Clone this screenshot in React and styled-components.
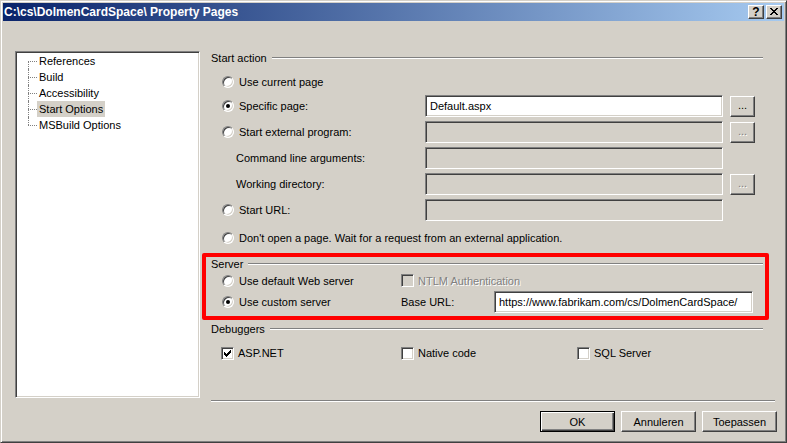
import React from 'react';
import styled, { createGlobalStyle } from 'styled-components';

const face = '#d4d0c8';

const GlobalStyle = createGlobalStyle`
    html, body {
        margin: 0;
        padding: 0;
        background: ${face};
    }
    body {
        font-family: "Liberation Sans", Arial, sans-serif;
        font-size: 11px;
        color: #000;
    }
    * { box-sizing: border-box; }
`

const Window = styled.div`
    width: 787px;
    height: 443px;
    display: flex;
    flex-direction: column;
    background: ${face};
    border: 1px solid;
    border-color: ${face} #404040 #404040 ${face};
    box-shadow: inset 1px 1px #fff, inset -1px -1px #808080;
    padding: 2px;
`

const TitleBar = styled.div`
    height: 18px;
    display: flex;
    align-items: center;
    padding: 0 2px 0 1px;
    background: linear-gradient(to right, #0a246a, #a6caf0);
`

const Title = styled.div`
    flex: 1;
    color: #fff;
    font-weight: bold;
    font-size: 12px;
    white-space: nowrap;
`

const CaptionButtons = styled.div`
    display: flex;
    gap: 2px;
`

const CaptionButton = styled.div`
    width: 16px;
    height: 14px;
    display: flex;
    align-items: center;
    justify-content: center;
    background: ${face};
    border: 1px solid;
    border-color: #fff #404040 #404040 #fff;
    box-shadow: inset -1px -1px #808080;
    font-weight: bold;
    font-size: 12px;
    line-height: 1;
    padding-bottom: 1px;
`

const Body = styled.div`
    flex: 1;
    display: flex;
    flex-direction: column;
    padding: 30px 7px 0 12px;
`

const Main = styled.div`
    display: flex;
    gap: 11px;
    height: 351px;
`

const Tree = styled.ul`
    list-style: none;
    margin: 0;
    width: 185px;
    height: 347px;
    padding: 0;
    background: #fff;
    border: 1px solid;
    border-color: #808080 #fff #fff #808080;
    box-shadow: inset 1px 1px #404040, inset -1px -1px ${face};
    padding-top: 1px;
`

const TreeItem = styled.li`
    position: relative;
    height: 16px;
    padding-left: 21px;
    display: flex;
    align-items: center;

    &::before {
        content: '';
        position: absolute;
        left: 12px;
        top: 8px;
        width: 9px;
        border-top: 1px dotted #808080;
    }
    &::after {
        content: '';
        position: absolute;
        left: 12px;
        top: ${p => (p.$first ? '8px' : '0')};
        height: ${p => (p.$first || p.$last ? '8px' : '16px')};
        border-left: 1px dotted #808080;
    }
`

const TreeLabel = styled.span`
    height: 16px;
    line-height: 16px;
    padding: 0 2px;
    background: ${p => (p.$selected ? face : 'transparent')};
`

const Pane = styled.div`
    width: 564px;
    display: flex;
    flex-direction: column;
`

const GroupHeader = styled.div`
    height: ${p => p.$h || 14}px;
    margin-top: ${p => p.$mt || 0}px;
    margin-right: ${p => (p.$inset ? 0 : 12)}px;
    display: flex;
    align-items: center;
    gap: 5px;

    &::after {
        content: '';
        flex: 1;
        border-top: 1px solid #808080;
        border-bottom: 1px solid #fff;
    }
`

const Row = styled.div`
    display: flex;
    align-items: center;
    height: ${p => p.$h || 22}px;
    margin-top: ${p => p.$mt || 0}px;
`

const Cell = styled.div`
    display: flex;
    align-items: center;
    gap: ${p => (p.$check ? 4 : 5)}px;
    width: ${p => (p.$w ? `${p.$w}px` : 'auto')};
    flex-shrink: 0;
    padding-left: ${p => p.$pl || 0}px;
    white-space: nowrap;
    color: ${p => (p.$disabled ? '#808080' : '#000')};
    text-shadow: ${p => (p.$disabled ? '1px 1px #fff' : 'none')};
`

const Radio = styled.span`
    width: 12px;
    height: 12px;
    flex-shrink: 0;
    border-radius: 50%;
    border: 1px solid;
    border-color: #808080 #fff #fff #808080;
    box-shadow: inset 1px 1px #404040, inset -1px -1px ${face};
    background: #fff;
    display: flex;
    align-items: center;
    justify-content: center;

    &::after {
        content: '';
        width: 4px;
        height: 4px;
        border-radius: 50%;
        background: #000;
        display: ${p => (p.$checked ? 'block' : 'none')};
    }
`

const CheckBox = styled.span`
    width: 13px;
    height: 13px;
    flex-shrink: 0;
    border: 1px solid;
    border-color: #808080 #fff #fff #808080;
    box-shadow: inset 1px 1px #404040, inset -1px -1px ${face};
    background: ${p => (p.$disabled ? face : '#fff')};
    display: flex;
    align-items: center;
    justify-content: center;
    text-shadow: none;
`

const TextBox = styled.div`
    width: ${p => p.$w}px;
    height: 22px;
    flex-shrink: 0;
    border: 1px solid;
    border-color: #808080 #fff #fff #808080;
    box-shadow: inset 1px 1px #404040, inset -1px -1px ${face};
    background: ${p => (p.$disabled ? face : '#fff')};
    padding: 0 4px;
    line-height: 20px;
    white-space: nowrap;
`

const Browse = styled.div`
    width: 25px;
    height: 21px;
    margin-left: 7px;
    flex-shrink: 0;
    display: flex;
    align-items: center;
    justify-content: center;
    border: 1px solid;
    border-color: #fff #404040 #404040 #fff;
    box-shadow: inset -1px -1px #808080;
    color: ${p => (p.$disabled ? '#808080' : '#000')};
    text-shadow: ${p => (p.$disabled ? '1px 1px #fff' : 'none')};
    padding-bottom: 2px;
`

const Highlight = styled.div`
    margin: 4px 6px 0 -9px;
    border: 4px solid #ff0000;
    border-radius: 2px;
    padding: 0 2px 3px 5px;
`

const Separator = styled.div`
    margin-top: auto;
    border-top: 1px solid #808080;
    border-bottom: 1px solid #fff;
`

const Footer = styled.div`
    display: flex;
    justify-content: flex-end;
    gap: 6px;
    margin-top: 9px;
`

const Button = styled.div`
    width: 75px;
    height: 21px;
    display: flex;
    align-items: center;
    justify-content: center;
    background: ${face};
    border: 1px solid;
    border-color: ${p => (p.$default ? '#000' : '#fff #404040 #404040 #fff')};
    box-shadow: ${p => (p.$default
        ? 'inset 1px 1px #fff, inset -1px -1px #404040, inset -2px -2px #808080'
        : 'inset -1px -1px #808080')};
`

const CloseGlyph = () => (
    <svg width="8" height="7" viewBox="0 0 8 7">
        <path d="M0 0h2v1h-2zM6 0h2v1h-2zM1 1h2v1h-2zM5 1h2v1h-2zM2 2h4v1h-4zM3 3h2v1h-2zM2 4h4v1h-4zM1 5h2v1h-2zM5 5h2v1h-2zM0 6h2v1h-2zM6 6h2v1h-2z" fill="#000" />
    </svg>
);

const CheckMark = () => (
    <svg width="7" height="7" viewBox="0 0 7 7">
        <path d="M0 2h1v3h-1zM1 3h1v3h-1zM2 4h1v3h-1zM3 3h1v3h-1zM4 2h1v3h-1zM5 1h1v3h-1zM6 0h1v3h-1z" fill="#000" />
    </svg>
);

const treeItems = ['References', 'Build', 'Accessibility', 'Start Options', 'MSBuild Options'];

const App = function() {
    return (
        <>
            <GlobalStyle />
            <Window>
                <TitleBar>
                    <Title>C:\cs\DolmenCardSpace\ Property Pages</Title>
                    <CaptionButtons>
                        <CaptionButton>?</CaptionButton>
                        <CaptionButton><CloseGlyph /></CaptionButton>
                    </CaptionButtons>
                </TitleBar>
                <Body>
                    <Main>
                        <Tree>
                            {treeItems.map((item, i) => (
                                <TreeItem key={item} $first={i === 0} $last={i === treeItems.length - 1}>
                                    <TreeLabel $selected={item === 'Start Options'}>{item}</TreeLabel>
                                </TreeItem>
                            ))}
                        </Tree>
                        <Pane>
                            <GroupHeader>Start action</GroupHeader>
                            <Row $mt={6}>
                                <Cell $pl={11} $w={214}><Radio />Use current page</Cell>
                            </Row>
                            <Row $mt={2}>
                                <Cell $pl={11} $w={214}><Radio $checked />Specific page:</Cell>
                                <TextBox $w={298}>Default.aspx</TextBox>
                                <Browse>...</Browse>
                            </Row>
                            <Row $mt={4}>
                                <Cell $pl={11} $w={214}><Radio />Start external program:</Cell>
                                <TextBox $w={298} $disabled />
                                <Browse $disabled>...</Browse>
                            </Row>
                            <Row $mt={4}>
                                <Cell $pl={25} $w={214}>Command line arguments:</Cell>
                                <TextBox $w={298} $disabled />
                            </Row>
                            <Row $mt={4}>
                                <Cell $pl={25} $w={214}>Working directory:</Cell>
                                <TextBox $w={298} $disabled />
                                <Browse $disabled>...</Browse>
                            </Row>
                            <Row $mt={4}>
                                <Cell $pl={11} $w={214}><Radio />Start URL:</Cell>
                                <TextBox $w={298} $disabled />
                            </Row>
                            <Row $mt={6}>
                                <Cell $pl={11}><Radio />Don't open a page. Wait for a request from an external application.</Cell>
                            </Row>

                            <Highlight>
                                <GroupHeader $inset $h={13}>Server</GroupHeader>
                                <Row $h={21}>
                                    <Cell $pl={11} $w={190}><Radio />Use default Web server</Cell>
                                    <Cell $check $disabled><CheckBox $disabled />NTLM Authentication</Cell>
                                </Row>
                                <Row>
                                    <Cell $pl={11} $w={190}><Radio $checked />Use custom server</Cell>
                                    <Cell $w={93}>Base URL:</Cell>
                                    <TextBox $w={259}>https://www.fabrikam.com/cs/DolmenCardSpace/</TextBox>
                                </Row>
                            </Highlight>

                            <GroupHeader $mt={2}>Debuggers</GroupHeader>
                            <Row $mt={6}>
                                <Cell $check $pl={10} $w={190}><CheckBox><CheckMark /></CheckBox>ASP.NET</Cell>
                                <Cell $check $w={176}><CheckBox />Native code</Cell>
                                <Cell $check><CheckBox />SQL Server</Cell>
                            </Row>
                            <Separator />
                        </Pane>
                    </Main>
                    <Footer>
                        <Button $default>OK</Button>
                        <Button>Annuleren</Button>
                        <Button>Toepassen</Button>
                    </Footer>
                </Body>
            </Window>
        </>
    )
}

export default App;
